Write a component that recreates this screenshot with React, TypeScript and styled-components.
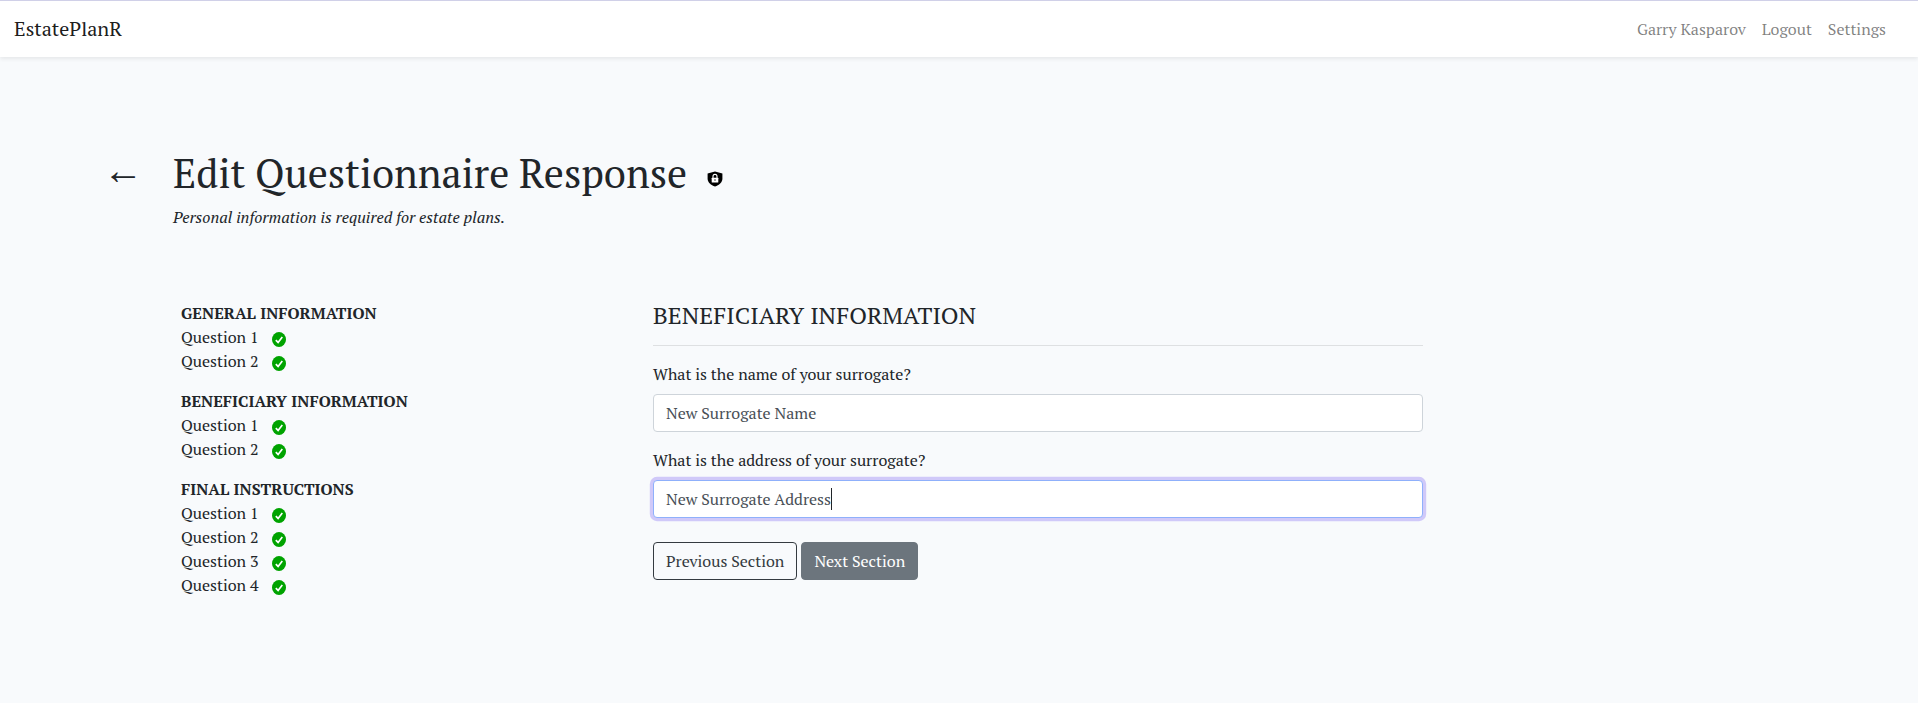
import React from "react";
import styled, { createGlobalStyle, css } from "styled-components";

const GlobalStyle = createGlobalStyle`
  *, *::before, *::after { box-sizing: border-box; }
  body {
    margin: 0;
    background: #f8fafc;
    color: #212529;
    font-family: "PT Serif", "Liberation Serif", serif;
    font-size: 16px;
    line-height: 1.5;
  }
`;

const Page = styled.div`
  min-height: 703px;
`;

const Navbar = styled.nav`
  display: flex;
  align-items: center;
  justify-content: space-between;
  height: 57px;
  padding: 0 32px 1px 14px;
  border-top: 1px solid #d0d0e8;
  background: #fff;
  box-shadow: 0 2px 4px rgba(0, 0, 0, 0.075);
`;

const Brand = styled.a`
  color: rgba(0, 0, 0, 0.9);
  font-size: 20px;
  line-height: 30px;
`;

const NavLinks = styled.div`
  display: flex;
  gap: 16px;
`;

const NavLink = styled.a`
  color: rgba(0, 0, 0, 0.5);
`;

const Header = styled.header`
  display: flex;
  padding: 92px 0 0 103px;
`;

const BackLink = styled.a`
  width: 70px;
  margin-top: -4px;
  font-size: 40px;
  line-height: 48px;
`;

const TitleRow = styled.div`
  display: flex;
  align-items: center;
  gap: 19.5px;
  margin-bottom: 8px;
`;

const Title = styled.h1`
  margin: 0;
  font-size: 40px;
  font-weight: 400;
  line-height: 1.2;
`;

const Subtitle = styled.p`
  margin: 0;
  font-style: italic;
`;

const ShieldIcon = styled.svg`
  display: block;
  width: 16px;
  height: 16px;
  margin-top: 11px;
`;

const Content = styled.main`
  display: grid;
  grid-template-columns: 472px 770px;
  padding: 72px 0 0 181px;
`;

const Sidebar = styled.aside`
  display: flex;
  flex-direction: column;
  gap: 16px;
`;

const SectionTitle = styled.div`
  font-weight: 700;
  text-transform: uppercase;
`;

const QuestionRow = styled.div`
  display: flex;
  align-items: center;
  gap: 13px;
  height: 24px;
`;

const CheckIcon = styled.svg`
  display: block;
  width: 14px;
  height: 15px;
  margin-top: 5px;
`;

const FormTitle = styled.h4`
  margin: 0;
  height: 28px;
  font-size: 24px;
  font-weight: 400;
  line-height: 28px;
  text-transform: uppercase;
`;

const Divider = styled.hr`
  margin: 16px 0;
  border: 0;
  border-top: 1px solid rgba(0, 0, 0, 0.1);
`;

const Field = styled.div`
  margin-bottom: 16px;
`;

const Label = styled.label`
  display: block;
  margin-bottom: 8px;
`;

const InputBox = styled.div<{ $focused?: boolean }>`
  display: flex;
  align-items: center;
  height: 38px;
  padding: 6px 12px;
  border: 1px solid #ced4da;
  border-radius: 4px;
  background: #fff;
  color: #495057;
  ${(p) =>
    p.$focused &&
    css`
      border-color: #8fb0fb;
      box-shadow: 0 0 0 3.2px #d0c9f9;
    `}
`;

const Caret = styled.span`
  width: 1px;
  height: 22px;
  background: #212529;
`;

const Actions = styled.div`
  display: flex;
  gap: 4px;
  padding-top: 8px;
`;

const Button = styled.button<{ $solid?: boolean }>`
  height: 38px;
  padding: 6px 12px;
  border: 1px solid ${(p) => (p.$solid ? "#6c757d" : "#343a40")};
  border-radius: 4px;
  background: ${(p) => (p.$solid ? "#6c757d" : "transparent")};
  color: ${(p) => (p.$solid ? "#fff" : "#343a40")};
  font: inherit;
`;

const sections = [
  { title: "General Information", count: 2 },
  { title: "Beneficiary Information", count: 2 },
  { title: "Final Instructions", count: 4 },
];

const Check = () => (
  <CheckIcon viewBox="0 0 14 15">
    <ellipse cx="7" cy="7.5" rx="7" ry="7.5" fill="#00a300" />
    <path d="M3.8 8.2 6.1 10.4 10.3 5" fill="none" stroke="#fff" strokeWidth="1.7" />
  </CheckIcon>
);

const Shield = () => (
  <ShieldIcon viewBox="0 0 16 16">
    <path d="M8 .4 15.4 2.4V7.5C15.4 11.5 12 14.3 8 15.6 4 14.3.6 11.5.6 7.5V2.4Z" fill="#000" />
    <rect x="4.7" y="6.7" width="6.6" height="4.8" rx=".5" fill="#fff" />
    <path d="M6 7V5.4a2 2 0 0 1 4 0V7" fill="none" stroke="#fff" strokeWidth="1.1" />
    <circle cx="8" cy="9" r=".7" fill="#000" />
  </ShieldIcon>
);

export default function App() {
  return (
    <Page>
      <GlobalStyle />
      <Navbar>
        <Brand>EstatePlanR</Brand>
        <NavLinks>
          <NavLink>Garry Kasparov</NavLink>
          <NavLink>Logout</NavLink>
          <NavLink>Settings</NavLink>
        </NavLinks>
      </Navbar>
      <Header>
        <BackLink>←</BackLink>
        <div>
          <TitleRow>
            <Title>Edit Questionnaire Response</Title>
            <Shield />
          </TitleRow>
          <Subtitle>Personal information is required for estate plans.</Subtitle>
        </div>
      </Header>
      <Content>
        <Sidebar>
          {sections.map((s) => (
            <div key={s.title}>
              <SectionTitle>{s.title}</SectionTitle>
              {Array.from({ length: s.count }, (_, i) => (
                <QuestionRow key={i}>
                  <span>Question {i + 1}</span>
                  <Check />
                </QuestionRow>
              ))}
            </div>
          ))}
        </Sidebar>
        <section>
          <FormTitle>Beneficiary Information</FormTitle>
          <Divider />
          <Field>
            <Label>What is the name of your surrogate?</Label>
            <InputBox>New Surrogate Name</InputBox>
          </Field>
          <Field>
            <Label>What is the address of your surrogate?</Label>
            <InputBox $focused>
              New Surrogate Address
              <Caret />
            </InputBox>
          </Field>
          <Actions>
            <Button>Previous Section</Button>
            <Button $solid>Next Section</Button>
          </Actions>
        </section>
      </Content>
    </Page>
  );
}
